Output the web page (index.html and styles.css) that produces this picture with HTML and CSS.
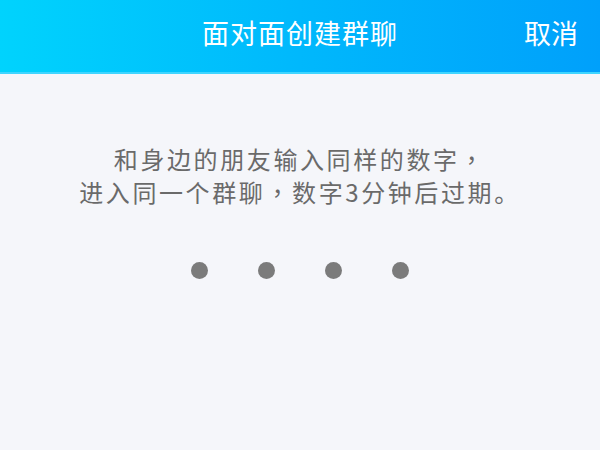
FILE: index.html
```html
<!DOCTYPE html>
<html lang="zh-CN">
<head>
<meta charset="utf-8">
<link rel="stylesheet" href="styles.css">
</head>
<body>
<div class="app">
  <header class="bar">
    <div class="side"></div>
    <div class="title">面对面创建群聊</div>
    <div class="side right">取消</div>
  </header>
  <main class="content">
    <p class="tip">和身边的朋友输入同样的数字<span class="punct" lang="zh-TW">，</span><br>进入同一个群聊<span class="punct" lang="zh-TW">，</span>数字3分钟后过期。</p>
    <div class="dots">
      <span class="dot"></span>
      <span class="dot"></span>
      <span class="dot"></span>
      <span class="dot"></span>
    </div>
  </main>
</div>
</body>
</html>
```
FILE: styles.css
```css
html, body {
  margin: 0;
  padding: 0;
  height: 100%;
}
body {
  background: #f5f6fa;
  font-family: "Noto Sans CJK SC", "Noto Sans", sans-serif;
}
.app {
  display: flex;
  flex-direction: column;
  height: 100%;
}
.bar {
  height: 72px;
  display: flex;
  align-items: center;
  justify-content: space-between;
  padding: 0 22px 0 0;
  background: linear-gradient(90deg, #00d3fd 0%, #00b8fc 50%, #00a0fb 100%);
  border-bottom: 2px solid #3fd5ff;
  box-sizing: content-box;
  color: #fff;
}
.side {
  width: 60px;
  font-size: 27px;
  line-height: 1;
  padding-bottom: 8px;
}
.side.right {
  text-align: right;
}
.title {
  font-size: 27px;
  letter-spacing: 1px;
  line-height: 1;
  padding-bottom: 8px;
  padding-left: 22px;
}
.content {
  display: flex;
  flex-direction: column;
  align-items: center;
}
.tip {
  margin: 68px 0 0;
  text-align: center;
  font-size: 24px;
  line-height: 33px;
  letter-spacing: 2.6px;
  color: #6a6a6a;
}
.punct {
  font-family: "Noto Sans CJK TC", "Noto Sans CJK SC", sans-serif;
}
.dots {
  display: flex;
  gap: 50px;
  margin-top: 54px;
}
.dot {
  width: 17px;
  height: 17px;
  border-radius: 50%;
  background: #7b7b7b;
}
```
